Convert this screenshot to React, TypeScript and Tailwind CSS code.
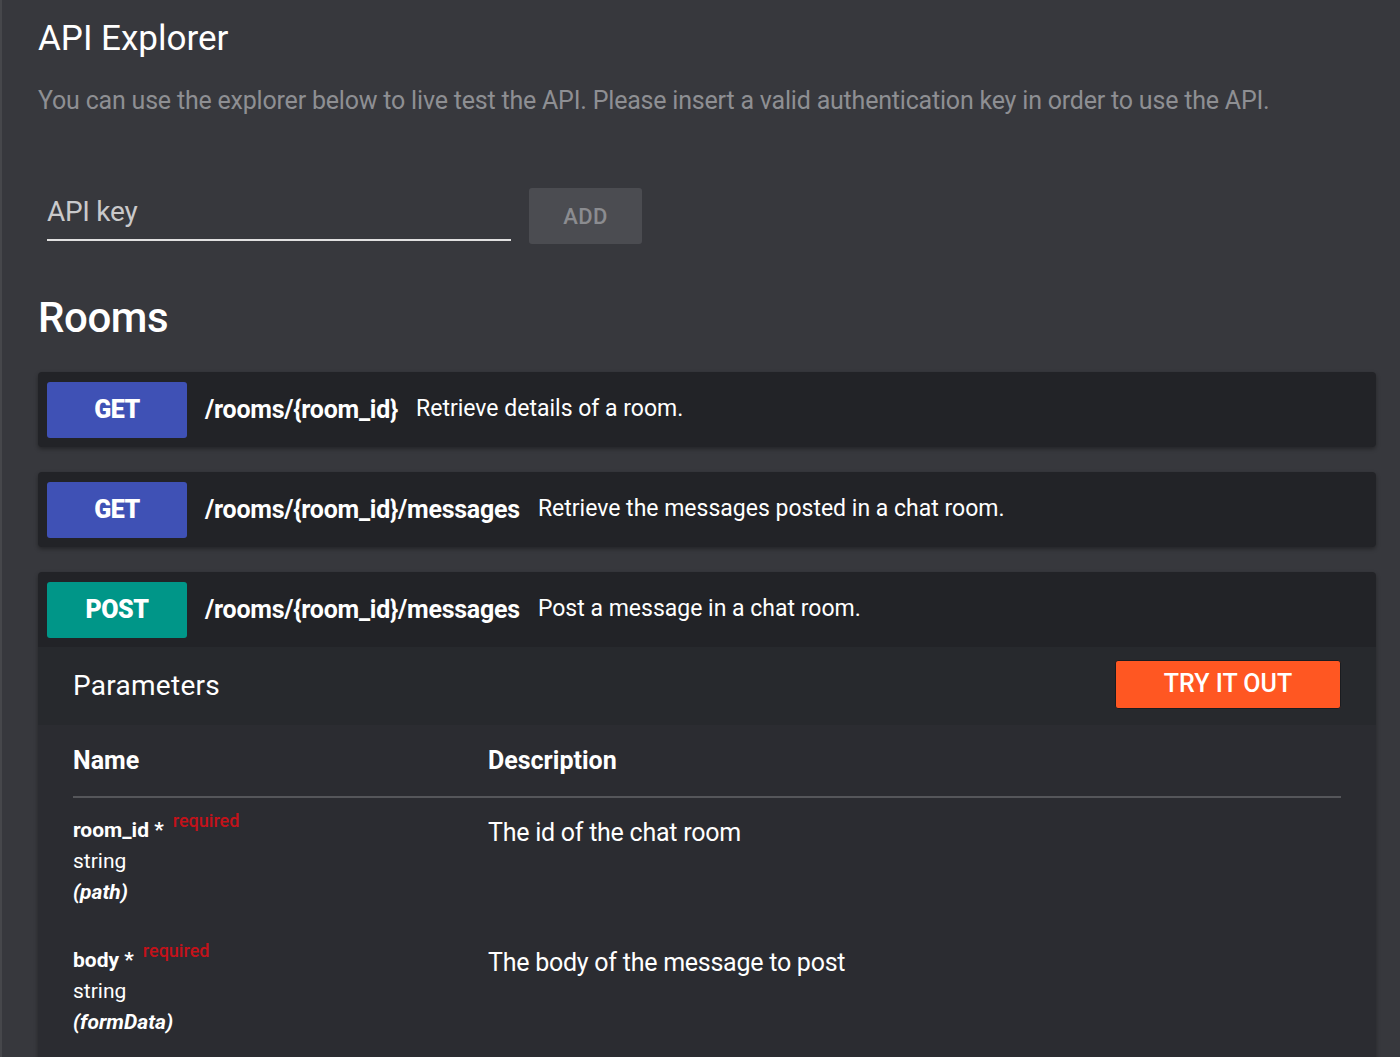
const ENDPOINTS = [
  { method: 'GET', path: '/rooms/{room_id}', summary: 'Retrieve details of a room.' },
  { method: 'GET', path: '/rooms/{room_id}/messages', summary: 'Retrieve the messages posted in a chat room.' },
];

const PARAMS = [
  { name: 'room_id', type: 'string', location: '(path)', description: 'The id of the chat room' },
  { name: 'body', type: 'string', location: '(formData)', description: 'The body of the message to post' },
];

function MethodBadge({ method }: { method: string }) {
  const color = method === 'POST' ? 'bg-[#009688]' : 'bg-[#3f51b5]';
  return (
    <div
      className={`flex h-[56px] w-[140px] shrink-0 items-center justify-center rounded-[3px] ${color} text-[25px] font-black tracking-[-0.02em] text-white`}
    >
      {method}
    </div>
  );
}

function EndpointHeader({ method, path, summary }: { method: string; path: string; summary: string }) {
  return (
    <div className="flex h-[75px] items-center gap-[18px] px-[9px]">
      <MethodBadge method={method} />
      <span className="text-[25px] font-bold tracking-[-0.01em]">{path}</span>
      <span className="text-[23px]">{summary}</span>
    </div>
  );
}

export default function App() {
  return (
    <div className="min-h-screen border-l-2 border-[#46474b] bg-[#37383d] pl-[36px] pr-[24px] font-['Roboto',sans-serif] text-white">
      {/* Header */}
      <h1 className="pt-[19px] text-[35px] leading-[40px]">API Explorer</h1>
      <p className="mt-[27px] text-[25px] leading-[30px] tracking-[-0.008em] text-[#8e8f93]">
        You can use the explorer below to live test the API. Please insert a valid authentication key in order to use the API.
      </p>

      {/* Key input */}
      <div className="mt-[72px] flex items-start gap-[18px] pl-[9px]">
        <div className="w-[464px] border-b-2 border-[#e0e0e0] pb-[10px] pt-[6px]">
          <input
            placeholder="API key"
            className="w-full bg-transparent text-[28px] leading-[35px] tracking-[-0.01em] text-[#d0d0d0] outline-none placeholder:text-[#c9c9cb]"
          />
        </div>
        <button
          type="button"
          className="h-[56px] w-[113px] rounded-[3px] bg-[#4b4c51] text-[22px] font-medium tracking-[0.02em] text-[#8b8c90]"
        >
          ADD
        </button>
      </div>

      <h2 className="mt-[44px] text-[42px] font-medium leading-[60px] tracking-[-0.01em]">Rooms</h2>

      {/* Endpoints */}
      <div className="mt-[24px] flex flex-col gap-[25px]">
        {ENDPOINTS.map((e) => (
          <div key={e.path} className="rounded-[4px] bg-[#222327] shadow-[0_2px_4px_rgba(0,0,0,0.35)]">
            <EndpointHeader {...e} />
          </div>
        ))}

        <div className="rounded-t-[4px] bg-[#222327] shadow-[0_2px_4px_rgba(0,0,0,0.35)]">
          <EndpointHeader method="POST" path="/rooms/{room_id}/messages" summary="Post a message in a chat room." />

          {/* Parameters bar */}
          <div className="flex h-[78px] items-center justify-between bg-[#27292d] px-[35px]">
            <span className="text-[28px] tracking-[0.01em]">Parameters</span>
            <button
              type="button"
              className="-mt-[4px] h-[49px] w-[226px] rounded-[3px] border border-[#1a1c20] bg-[#ff5722] text-[25px] font-medium text-white"
            >
              TRY IT OUT
            </button>
          </div>

          {/* Params table */}
          <div className="bg-[#2b2c31] px-[35px] pb-[40px]">
            <div className="grid h-[73px] grid-cols-[415px_1fr] items-center border-b-2 border-[#55565a]">
              <span className="text-[25px] font-bold">Name</span>
              <span className="text-[25px] font-bold">Description</span>
            </div>
            <div className="flex flex-col gap-[37px] pt-[17px]">
              {PARAMS.map((p) => (
                <div key={p.name} className="grid grid-cols-[415px_1fr]">
                  <div className="flex flex-col text-[21px] leading-[31px]">
                    <span className="font-bold">
                      {p.name} *
                      <sup className="relative -top-[10px] ml-[9px] text-[18px] font-medium text-[#c4121a]">required</sup>
                    </span>
                    <span>{p.type}</span>
                    <span className="font-bold italic">{p.location}</span>
                  </div>
                  <div className="pt-[2px] text-[25px] leading-[31px] tracking-[-0.01em]">{p.description}</div>
                </div>
              ))}
            </div>
          </div>
        </div>
      </div>
    </div>
  );
}
